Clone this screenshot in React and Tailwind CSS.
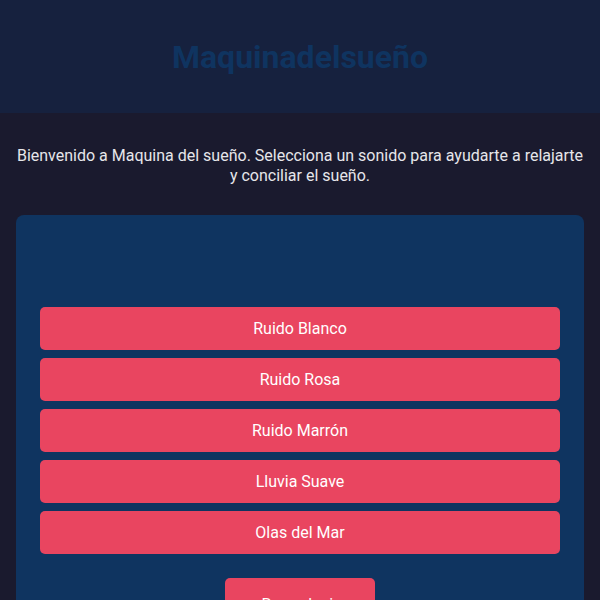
import React, { useState } from 'react'

const SOUNDS = ['Ruido Blanco', 'Ruido Rosa', 'Ruido Marrón', 'Lluvia Suave', 'Olas del Mar']

export default function App() {
  const [active, setActive] = useState(null)

  return (
    <div className="min-h-screen bg-[#1a1a2e] text-[#eaeaea]" style={{ fontFamily: 'Roboto, "Noto Sans", sans-serif' }}>
      <header className="h-[113px] bg-[#16213e] flex items-center justify-center">
        <h1 className="text-[32px] font-bold text-[#0f3460] leading-none">Maquinadelsueño</h1>
      </header>

      <main className="px-4">
        <p className="mt-[33px] text-center text-[16px] leading-[20px] text-[#e6e6ea]">
          Bienvenido a Maquina del sueño. Selecciona un sonido para ayudarte a relajarte y conciliar el sueño.
        </p>

        <section className="mt-[29px] bg-[#0f3460] rounded-lg px-6 pt-6 pb-6">
          <div className="h-[68px]"></div>
          <div className="flex flex-col gap-2">
            {SOUNDS.map((s) => (
              <button
                key={s}
                onClick={() => setActive(s)}
                className="h-[43px] w-full rounded-[5px] bg-[#e94560] text-white text-[16px]"
              >
                {s}
              </button>
            ))}
          </div>
          <div className="flex justify-center mt-6">
            <button className="h-[54px] w-[150px] rounded-[5px] bg-[#e94560] text-white text-[16px]">
              Reproducir
            </button>
          </div>
        </section>
      </main>
    </div>
  )
}
